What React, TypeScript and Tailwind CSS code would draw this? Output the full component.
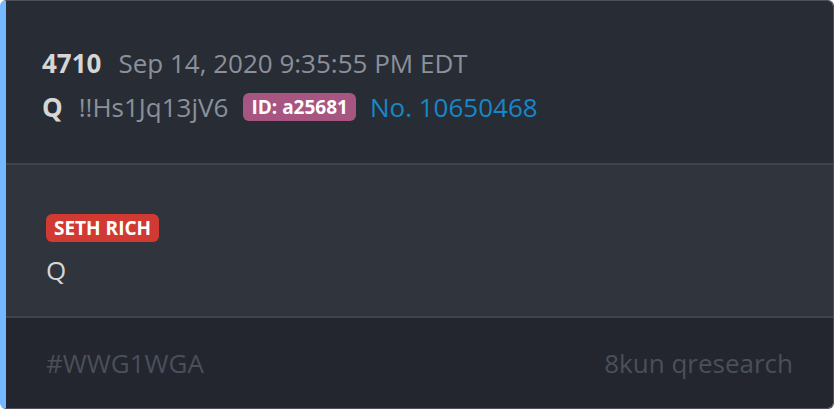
export default function App() {
  return (
    <div className="h-[410px] w-[836px] bg-white" style={{ fontFamily: '"Open Sans", sans-serif' }}>
      <div className="flex h-[409px] w-[834px] flex-col overflow-hidden rounded-md border border-[#4b5059] border-l-[6px] border-l-[#74b9ff]">
        {/* post header */}
        <div className="flex h-[162px] flex-col bg-[#282c34] pl-[36px] pt-[44px] text-[26px] leading-[36px]">
          <div className="flex items-center">
            <span className="font-bold text-[#d6d6d6]">4710</span>
            <span className="ml-[17px] text-[#8b909b]">Sep 14, 2020 9:35:55 PM EDT</span>
          </div>
          <div className="mt-[8px] flex items-center">
            <span className="font-bold text-[#d6d6d6]">Q</span>
            <span className="ml-[16px] text-[#8b909b]">!!Hs1Jq13jV6</span>
            <span className="ml-[15px] rounded-md bg-[#a65681] px-[8px] text-[19px] font-bold leading-[28px] text-white">
              ID: a25681
            </span>
            <span className="ml-[14px] text-[#1787c8]">No. 10650468</span>
          </div>
        </div>
        <div className="h-[2px] bg-[#3e434c]" />
        {/* post body */}
        <div className="flex h-[151px] flex-col items-start bg-[#2f343d] pl-[40px] pt-[49px]">
          <span className="rounded-md bg-[#d03a33] px-[8px] text-[19px] font-bold leading-[28px] text-white">
            SETH RICH
          </span>
          <span className="mt-[10px] text-[26px] leading-[36px] text-[#d6d6d6]">Q</span>
        </div>
        <div className="h-[2px] bg-[#3e434c]" />
        {/* post footer */}
        <div className="flex flex-1 items-start justify-between bg-[#23262e] pl-[40px] pr-[40px] pt-[27px] text-[26px] leading-[36px] text-[#4a4f5a]">
          <span>#WWG1WGA</span>
          <span>8kun qresearch</span>
        </div>
      </div>
    </div>
  );
}
